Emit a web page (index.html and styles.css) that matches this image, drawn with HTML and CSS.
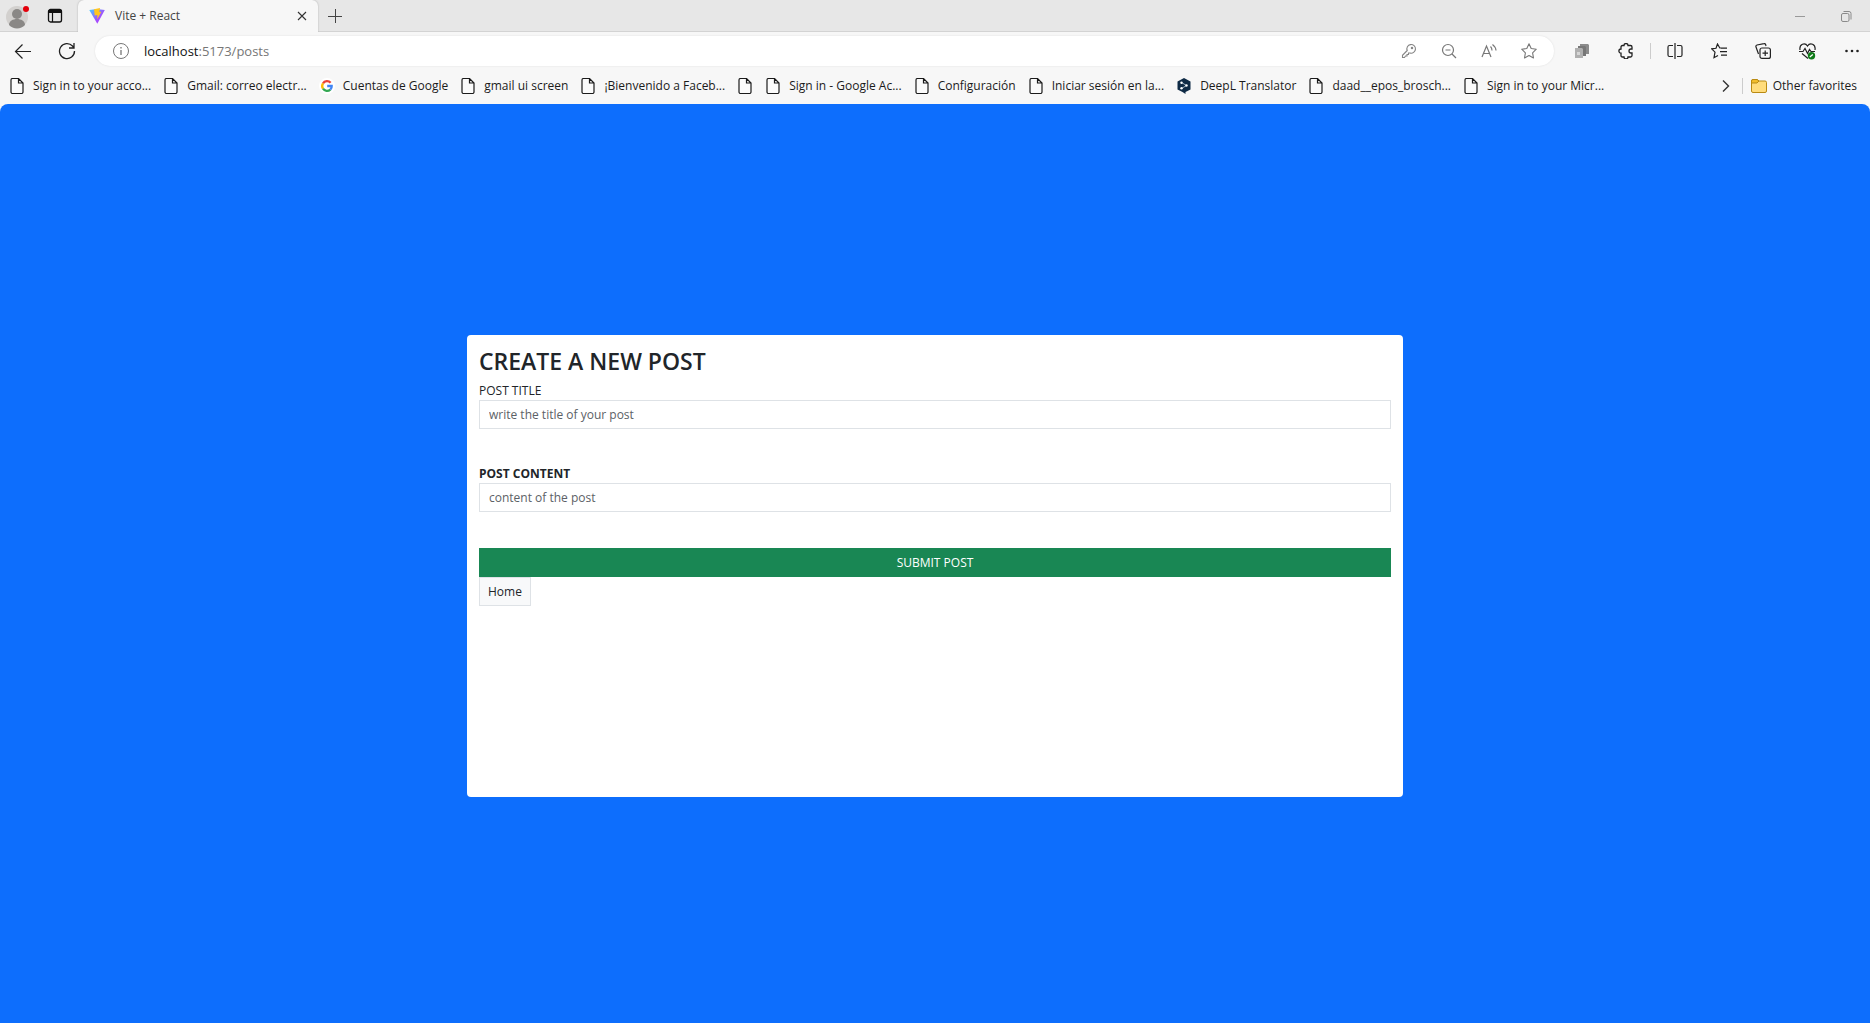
FILE: index.html
```html
<!DOCTYPE html>
<html lang="en">
<head>
<meta charset="utf-8">
<meta name="viewport" content="width=device-width, initial-scale=1">
<title>Vite + React</title>
<link rel="stylesheet" href="styles.css">
</head>
<body>
<svg class="defs" aria-hidden="true">
  <symbol id="file" viewBox="0 0 16 16"><path d="M3.500.5h6l4.500 4.500v9a1.500 1.500 0 0 1-1.500 1.500h-9A1.500 1.500 0 0 1 2 14V2A1.500 1.500 0 0 1 3.500.5zM9.500.5V5H14" fill="#fbfbfb" stroke="#1b1b1b" stroke-width="1.200"/></symbol>
</svg>
<header class="browser">
  <div class="tabs">
    <button class="icon-btn profile" aria-label="Profile">
      <svg width="24" height="26" viewBox="0 0 24 26"><circle cx="12" cy="14" r="11" fill="#d2d0ce"/><circle cx="12" cy="11" r="5" fill="#8a8886"/><path d="M4 22c0-8 16-8 16 0a11 11 0 0 1-16 0z" fill="#8a8886"/><circle cx="21" cy="6" r="3" fill="#e3000b"/></svg>
    </button>
    <button class="icon-btn workspace" aria-label="Tab actions">
      <svg width="16" height="16" viewBox="0 0 16 16"><rect x="1.500" y="1.500" width="13" height="12.500" rx="2" fill="none" stroke="#111" stroke-width="1.300"/><path d="M1.500 2h13v3h-13z" fill="#111"/><path d="M5.500 5v9" stroke="#111" stroke-width="1.200"/></svg>
    </button>
    <div class="tab">
      <svg width="16" height="16" viewBox="0 0 16 16"><defs><linearGradient id="v" x1="0" y1="0" x2="1" y2="1"><stop offset="0" stop-color="#41d1ff"/><stop offset=".6" stop-color="#a050fe"/><stop offset="1" stop-color="#bd34fe"/></linearGradient></defs><path d="M.3 2 8 .9 15.800 2 8.300 15.800z" fill="url(#v)"/><path d="M5 1.300 11 0l-.7 4 2-.3-4.100 7.800.2-4.500-2.700.5z" fill="#ffc51f"/></svg>
      <span class="tab-title">Vite + React</span>
      <button class="icon-btn" aria-label="Close tab"><svg width="12" height="12" viewBox="0 0 12 12"><path d="m2 2 8 8m0-8-8 8" stroke="#333" stroke-width="1.100"/></svg></button>
    </div>
    <button class="icon-btn new-tab" aria-label="New tab"><svg width="14" height="14" viewBox="0 0 14 14"><path d="M7.500 0v14M0 7.500h14" stroke="#444"/></svg></button>
    <div class="window-controls">
      <button class="icon-btn" aria-label="Minimize"><svg width="10" height="10" viewBox="0 0 10 10"><path d="M0 5.500h10" stroke="#999"/></svg></button>
      <button class="icon-btn" aria-label="Restore"><svg width="11" height="11" viewBox="0 0 11 11" fill="none" stroke="#8a8a8a"><rect x=".5" y="2.500" width="7.500" height="8" rx="1.500"/><path d="M2.500.5H8a2 2 0 0 1 2 2v6"/></svg></button>
    </div>
  </div>

  <div class="toolbar">
    <button class="icon-btn back" aria-label="Back"><svg width="18" height="16" viewBox="0 0 18 16" fill="none" stroke="#222" stroke-width="1.200"><path d="M17 8.500H1.500M8.500 1.500l-7 7 7 7"/></svg></button>
    <button class="icon-btn reload" aria-label="Refresh"><svg width="18" height="18" viewBox="0 0 18 18" fill="none" stroke="#222" stroke-width="1.300"><path d="M16.500 9A7.500 7.500 0 1 1 14.500 4l1.500 1.700M16 1v5h-5"/></svg></button>
    <div class="address">
      <button class="icon-btn" aria-label="Site information"><svg width="18" height="18" viewBox="0 0 18 18" fill="none" stroke="#777"><circle cx="9" cy="9" r="7.500"/><path d="M9 8v5M9 5v1.500" stroke-width="1.300"/></svg></button>
      <div class="url" role="textbox" aria-label="Address" contenteditable="true" spellcheck="false"><span class="host">localhost</span>:5173/posts</div>
      <div class="address-tools">
        <button class="icon-btn" aria-label="Passwords"><svg width="16" height="16" viewBox="0 0 16 16" fill="none" stroke="#858585" stroke-width="1.100"><path d="M6.200 7.500A4.300 4.300 0 1 1 9 10H7.500v1.500H6V13H4.500L3.500 14.500H1.500V12.300z"/><circle cx="11" cy="5" r=".7"/></svg></button>
        <button class="icon-btn" aria-label="Zoom out"><svg width="16" height="16" viewBox="0 0 16 16" fill="none" stroke="#777" stroke-width="1.200"><circle cx="7" cy="7" r="5.500"/><path d="m11 11 4 4M4.500 7h5"/></svg></button>
        <button class="icon-btn" aria-label="Read aloud"><svg width="16" height="16" viewBox="0 0 16 16" fill="none" stroke="#777" stroke-width="1.200"><path d="M1 14 5.500 3 10 14M2.500 10.500h6M9.500 3.500q1.500 1.500 1.500 4M11.500 1.500q3.300 2.500 3.500 6"/></svg></button>
        <button class="icon-btn" aria-label="Add to favorites"><svg width="16" height="16" viewBox="0 0 16 16" fill="none" stroke="#777" stroke-width="1.100"><path d="m8 .8 2.200 4.700 5.100.7-3.700 3.600.9 5.200L8 12.500 3.500 15l.9-5.200L.7 6.200l5.100-.7z" stroke-linejoin="round"/></svg></button>
      </div>
    </div>
    <div class="actions">
      <button class="icon-btn" aria-label="Copy extension"><svg width="16" height="16" viewBox="0 0 16 16"><path d="M6 1h8l1 1v9H6z" fill="#8b8b8b"/><path d="M4 3h7l1 1v9H4z" fill="#777"/><path d="M1 5h7l1 1v9H1z" fill="#b0b0b0"/><path d="M3 9h3v3H3z" fill="#d6d6d6"/></svg></button>
      <button class="icon-btn" aria-label="Extensions"><svg width="16" height="16" viewBox="0 0 16 16" fill="none" stroke="#222" stroke-width="1.300"><path d="M4.500 2.500H6a2 2 0 0 1 4 0h2.500q1.500 0 1.500 1.500v2h-1a2 2 0 0 0 0 4h1v2.500q0 1.500-1.500 1.500H10a2 2 0 0 1-4 0H4.500Q3 14 3 12.500v-2.300a2.100 2.100 0 0 1 0-4.200V4q0-1.500 1.500-1.500z"/></svg></button>
      <span class="divider"></span>
      <button class="icon-btn" aria-label="Split screen"><svg width="16" height="16" viewBox="0 0 16 16" fill="none" stroke="#222" stroke-width="1.200"><path d="M6 2.500H2.500Q1 2.500 1 4v8q0 1.500 1.500 1.500H6M10 2.500h3.500Q15 2.500 15 4v8q0 1.500-1.500 1.500H10M8 0v16"/></svg></button>
      <button class="icon-btn" aria-label="Favorites"><svg width="16" height="16" viewBox="0 0 16 16" fill="none" stroke="#222" stroke-width="1.200"><path d="M13 5H8.800L6.500 1 5 5.300l-4.300.5L4 9.200l-1 5.500 4-2.200M10 5.200h6M9 8.700h7M10 12.200h6"/></svg></button>
      <button class="icon-btn" aria-label="Collections"><svg width="16" height="16" viewBox="0 0 16 16" fill="none" stroke="#222" stroke-width="1.200"><path d="M3.500 11 1 4q-.5-1.500 1-2L9 .7q1.200-.3 1.700 1L11 3"/><rect x="5" y="5" width="10.400" height="10.400" rx="2"/><path d="M10.200 7.500v5.500M7.500 10.200h5.500"/></svg></button>
      <button class="icon-btn" aria-label="Browser essentials"><svg width="17" height="17" viewBox="0 0 17 17" fill="none" stroke="#222" stroke-width="1.200"><path d="M1 7C0 1 6-1 8.500 3 11-1 17 1 16 7M0 8.500h4l2-3 2.500 5 2-4L12 8.500h4M3 10.500l6 5"/><circle cx="12.500" cy="12.800" r="3.700" fill="#0f7b18" stroke="none"/><path d="m10.800 14 3-2.500" stroke="#fff"/></svg></button>
      <button class="icon-btn" aria-label="Settings and more"><svg width="16" height="16" viewBox="0 0 16 16" fill="#222"><circle cx="2.500" cy="8" r="1.300"/><circle cx="8" cy="8" r="1.300"/><circle cx="13.500" cy="8" r="1.300"/></svg></button>
    </div>
  </div>

  <nav class="bookmarks" aria-label="Favorites bar">
    <a href="#"><svg><use href="#file"/></svg>Sign in to your acco...</a>
    <a href="#"><svg><use href="#file"/></svg>Gmail: correo electr...</a>
    <a href="#"><svg viewBox="0 0 16 16" fill="none" stroke-width="2.300"><circle cx="8" cy="8" r="8" fill="#fff"/><path d="M4 5.300A4.700 4.700 0 0 1 11.600 4.700" stroke="#ea4335"/><path d="M4 5.300a5 5 0 0 0 0 5.400" stroke="#fbbc05"/><path d="M4 10.700a4.800 4.800 0 0 0 7.300.9" stroke="#34a853"/><path d="M11.300 11.600A4.500 4.500 0 0 0 12.700 8H8.200" stroke="#4285f4"/></svg>Cuentas de Google</a>
    <a href="#"><svg><use href="#file"/></svg>gmail ui screen</a>
    <a href="#"><svg><use href="#file"/></svg>¡Bienvenido a Faceb...</a>
    <a href="#" aria-label="Untitled"><svg><use href="#file"/></svg></a>
    <a href="#"><svg><use href="#file"/></svg>Sign in - Google Ac...</a>
    <a href="#"><svg><use href="#file"/></svg>Configuración</a>
    <a href="#"><svg><use href="#file"/></svg>Iniciar sesión en la...</a>
    <a href="#"><svg viewBox="0 0 16 16"><path d="m8 0 6.500 3.500v8L9.500 14v2l-3-2-5-2.500v-8z" fill="#0f2b46"/><path d="m5.500 4.500 5 3-5 3" fill="none" stroke="#9fb3c4"/><g fill="#fff"><circle cx="5.500" cy="4.700" r="1.200"/><circle cx="10.500" cy="7.500" r="1.200"/><circle cx="5.500" cy="10.300" r="1.200"/></g></svg>DeepL Translator</a>
    <a href="#"><svg><use href="#file"/></svg>daad__epos_brosch...</a>
    <a href="#"><svg><use href="#file"/></svg>Sign in to your Micr...</a>
    <div class="more">
      <button class="icon-btn" aria-label="More favorites"><svg viewBox="0 0 16 16" fill="none" stroke="#333" stroke-width="1.400"><path d="m5 2.500 5.500 5.500L5 13.500"/></svg></button>
      <span class="divider"></span>
      <a href="#"><svg viewBox="0 0 16 16"><path d="M.5 3Q.5 1.500 2 1.500h4l2 1.500h6q1.500 0 1.500 1.500V13q0 1.500-1.500 1.500H2Q.5 14.500.5 13z" fill="#ffdc7c" stroke="#b98a13"/><path d="M.5 5H6l2-2-2-1.500H2Q.5 1.500.5 3z" fill="#f2bd2c" stroke="#b98a13"/></svg>Other favorites</a>
    </div>
  </nav>
</header>

<main class="page">
  <div class="stage">
    <form class="card">
      <h1>CREATE A NEW POST</h1>
      <div class="field">
        <label for="title">POST TITLE</label>
        <input id="title" type="text" placeholder="write the title of your post">
      </div>
      <div class="field">
        <label class="strong" for="content">POST CONTENT</label>
        <input id="content" type="text" placeholder="content of the post">
      </div>
      <button class="submit" type="submit">SUBMIT POST</button>
      <a class="home" href="#">Home</a>
    </form>
  </div>
</main>
</body>
</html>
```
FILE: styles.css
```css
* { box-sizing: border-box; }
body {
  margin: 0;
  height: 100vh;
  display: flex;
  flex-direction: column;
  overflow: hidden;
  background: #f7f7f7;
  color: #1b1b1b;
  font: 12px/18px "Segoe UI", "Open Sans", "Noto Sans", sans-serif;
}
.defs { position: absolute; width: 0; height: 0; }
svg { display: block; flex: none; }
a { color: inherit; text-decoration: none; }
button, input { font: inherit; color: inherit; }
.icon-btn {
  display: flex;
  align-items: center;
  justify-content: center;
  padding: 0;
  border: 0;
  background: none;
}
.divider { width: 1px; height: 16px; background: #ccc; }

.tabs {
  display: flex;
  align-items: center;
  height: 32px;
  background: #e7e7e7;
  box-shadow: inset 0 -1px #d3d3d3;
}
.profile { margin-left: 5px; }
.workspace { margin-left: 18px; }
.tab {
  display: flex;
  align-items: center;
  width: 240px;
  height: 32px;
  margin-left: 15px;
  padding: 0 10px 0 11px;
  border-radius: 6px 6px 0 0;
  background: #f7f7f7;
  box-shadow: 0 0 2px #aaa;
  clip-path: inset(0 -3px 0 -3px);
  color: #444;
}
.tab-title { flex: 1; margin-left: 10px; }
.new-tab { margin-left: 10px; }
.window-controls { display: flex; align-items: center; gap: 36px; margin: 0 18px 0 auto; }

.toolbar {
  display: flex;
  align-items: center;
  height: 38px;
}
.back { margin-left: 14px; }
.reload { margin-left: 26px; }
.address {
  flex: 1;
  display: flex;
  align-items: center;
  height: 30px;
  margin-left: 19px;
  padding: 0 17px;
  border-radius: 15px;
  background: #fff;
  box-shadow: 0 0 2px #ddd;
}
.url { flex: 1; margin-left: 14px; font-size: 13px; color: #767676; outline: 0; }
.host { color: #111; }
.address-tools { display: flex; gap: 24px; }
.actions { display: flex; align-items: center; gap: 28px; margin: 0 10px 0 20px; }
.actions .divider { margin: 0 -12px; }

.bookmarks {
  display: flex;
  align-items: center;
  gap: 12px;
  height: 34px;
  padding: 0 13px 2px 9px;
  white-space: nowrap;
}
.bookmarks a { display: flex; align-items: center; gap: 8px; }
.bookmarks svg { width: 16px; height: 16px; }
.more { display: flex; align-items: center; gap: 8px; margin-left: auto; }
.more a { gap: 6px; }

.page {
  flex: 1;
  min-height: 0;
  overflow: hidden;
  border-radius: 8px 8px 0 0;
  background: #0d6efd;
}
.stage {
  display: flex;
  align-items: center;
  justify-content: center;
  height: calc(100% + 5px);
}
.card {
  width: calc(50% + 1px);
  height: 50%;
  padding: 12px;
  border-radius: 4px;
  background: #fff;
  color: #212529;
}
h1 { margin: 0 0 6px; font-size: 23px; line-height: 29px; font-weight: 600; }
.field { display: flex; flex-direction: column; margin-bottom: 36px; }
.strong { font-weight: 700; }
.field input {
  height: 29px;
  padding: 0 9px;
  border: 1px solid #dee2e6;
  border-radius: 0;
  background: #fff;
}
.field input::placeholder { color: #5c6166; opacity: 1; }
.submit {
  display: block;
  width: 100%;
  height: 29px;
  padding: 0;
  border: 0;
  background: #198754;
  color: #fff;
}
.home {
  display: inline-block;
  padding: 5px 8px;
  border: 1px solid #dee2e6;
  background: #f8f9fa;
  line-height: 17px;
}
```
